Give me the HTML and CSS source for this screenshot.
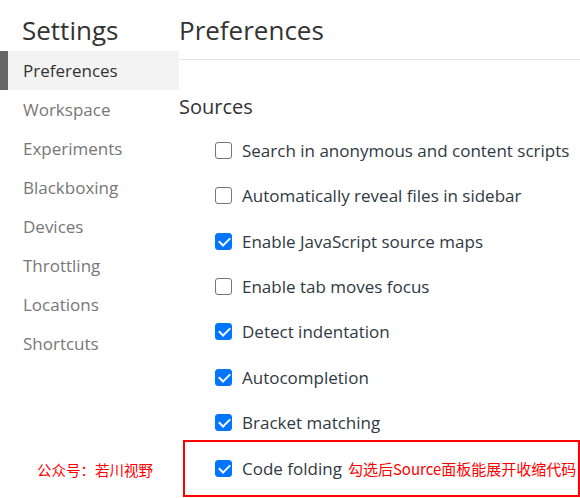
FILE: index.html
```html
<!DOCTYPE html>
<html>
<head>
<meta charset="utf-8">
<link rel="stylesheet" href="styles.css">
</head>
<body>
<div class="app">
  <aside class="sidebar">
    <h1 class="title">Settings</h1>
    <nav class="nav">
      <div class="nav-item active">Preferences</div>
      <div class="nav-item">Workspace</div>
      <div class="nav-item">Experiments</div>
      <div class="nav-item">Blackboxing</div>
      <div class="nav-item">Devices</div>
      <div class="nav-item">Throttling</div>
      <div class="nav-item">Locations</div>
      <div class="nav-item">Shortcuts</div>
    </nav>
    <div class="watermark">公众号：若川视野</div>
  </aside>
  <main class="main">
    <h2 class="header">Preferences</h2>
    <section class="section">
      <h3 class="section-title">Sources</h3>
      <div class="options">
        <label class="opt"><span class="cb"></span><span class="lbl">Search in anonymous and content scripts</span></label>
        <label class="opt"><span class="cb"></span><span class="lbl">Automatically reveal files in sidebar</span></label>
        <label class="opt"><span class="cb on"></span><span class="lbl">Enable JavaScript source maps</span></label>
        <label class="opt"><span class="cb"></span><span class="lbl">Enable tab moves focus</span></label>
        <label class="opt"><span class="cb on"></span><span class="lbl">Detect indentation</span></label>
        <label class="opt"><span class="cb on"></span><span class="lbl">Autocompletion</span></label>
        <label class="opt"><span class="cb on"></span><span class="lbl">Bracket matching</span></label>
        <div class="highlight">
          <label class="opt"><span class="cb on"></span><span class="lbl">Code folding</span><span class="note">勾选后Source面板能展开收缩代码</span></label>
        </div>
      </div>
    </section>
  </main>
</div>
</body>
</html>
```
FILE: styles.css
```css
* { box-sizing: border-box; }
html, body { margin: 0; padding: 0; background: #fff; }
body {
  font-family: "Open Sans", "Noto Sans", sans-serif;
  width: 580px;
  height: 498px;
  overflow: hidden;
}
.app { display: flex; height: 498px; }
.sidebar { width: 179px; flex: none; position: relative; }
.title {
  margin: 0;
  padding: 13px 0 0 22px;
  height: 51px;
  font-size: 26px;
  font-weight: 400;
  color: #333;
  line-height: 34px;
}
.nav { display: flex; flex-direction: column; }
.nav-item {
  height: 39px;
  line-height: 40px;
  font-size: 17px;
  color: #777;
  border-left: 8px solid transparent;
  padding-left: 15px;
}
.nav-item.active {
  background: #f3f3f3;
  border-left-color: #666;
  color: #333;
}
.watermark {
  position: absolute;
  left: 37px;
  top: 459px;
  font-size: 14.5px;
  color: #f00;
  font-family: "Noto Sans CJK SC", sans-serif;
}
.main { flex: 1; display: flex; flex-direction: column; }
.header {
  margin: 0;
  height: 60px;
  padding: 13px 0 0 0;
  font-size: 26px;
  font-weight: 400;
  line-height: 34px;
  color: #333;
  border-bottom: 1px solid #e6e6e6;
}
.section { padding: 0; }
.section-title {
  margin: 0;
  padding-top: 33px;
  height: 68px;
  font-size: 20px;
  font-weight: 400;
  line-height: 28px;
  color: #333;
}
.options { display: flex; flex-direction: column; }
.opt {
  display: flex;
  align-items: center;
  height: 45.3px;
  padding-left: 36px;
}
.cb {
  width: 17px;
  height: 17px;
  border: 1.5px solid #767676;
  border-radius: 3px;
  flex: none;
  margin-right: 10px;
  position: relative;
}
.cb.on {
  background: #0075ff;
  border-color: #0075ff;
}
.cb.on::after {
  content: "";
  position: absolute;
  left: 4.5px;
  top: 1px;
  width: 5px;
  height: 9px;
  border: solid #fff;
  border-width: 0 2.5px 2.5px 0;
  transform: rotate(45deg);
}
.lbl { font-size: 17px; color: #303942; white-space: nowrap; }
.highlight {
  margin-left: 4px;
  margin-top: -5px;
  border: 2px solid #f00;
  height: 57px;
  display: flex;
  align-items: center;
}
.highlight .opt { padding-left: 30px; height: auto; }
.note {
  margin-left: 6px;
  font-size: 15px;
  color: #f00;
  font-family: "Noto Sans CJK SC", sans-serif;
  white-space: nowrap;
}
```
